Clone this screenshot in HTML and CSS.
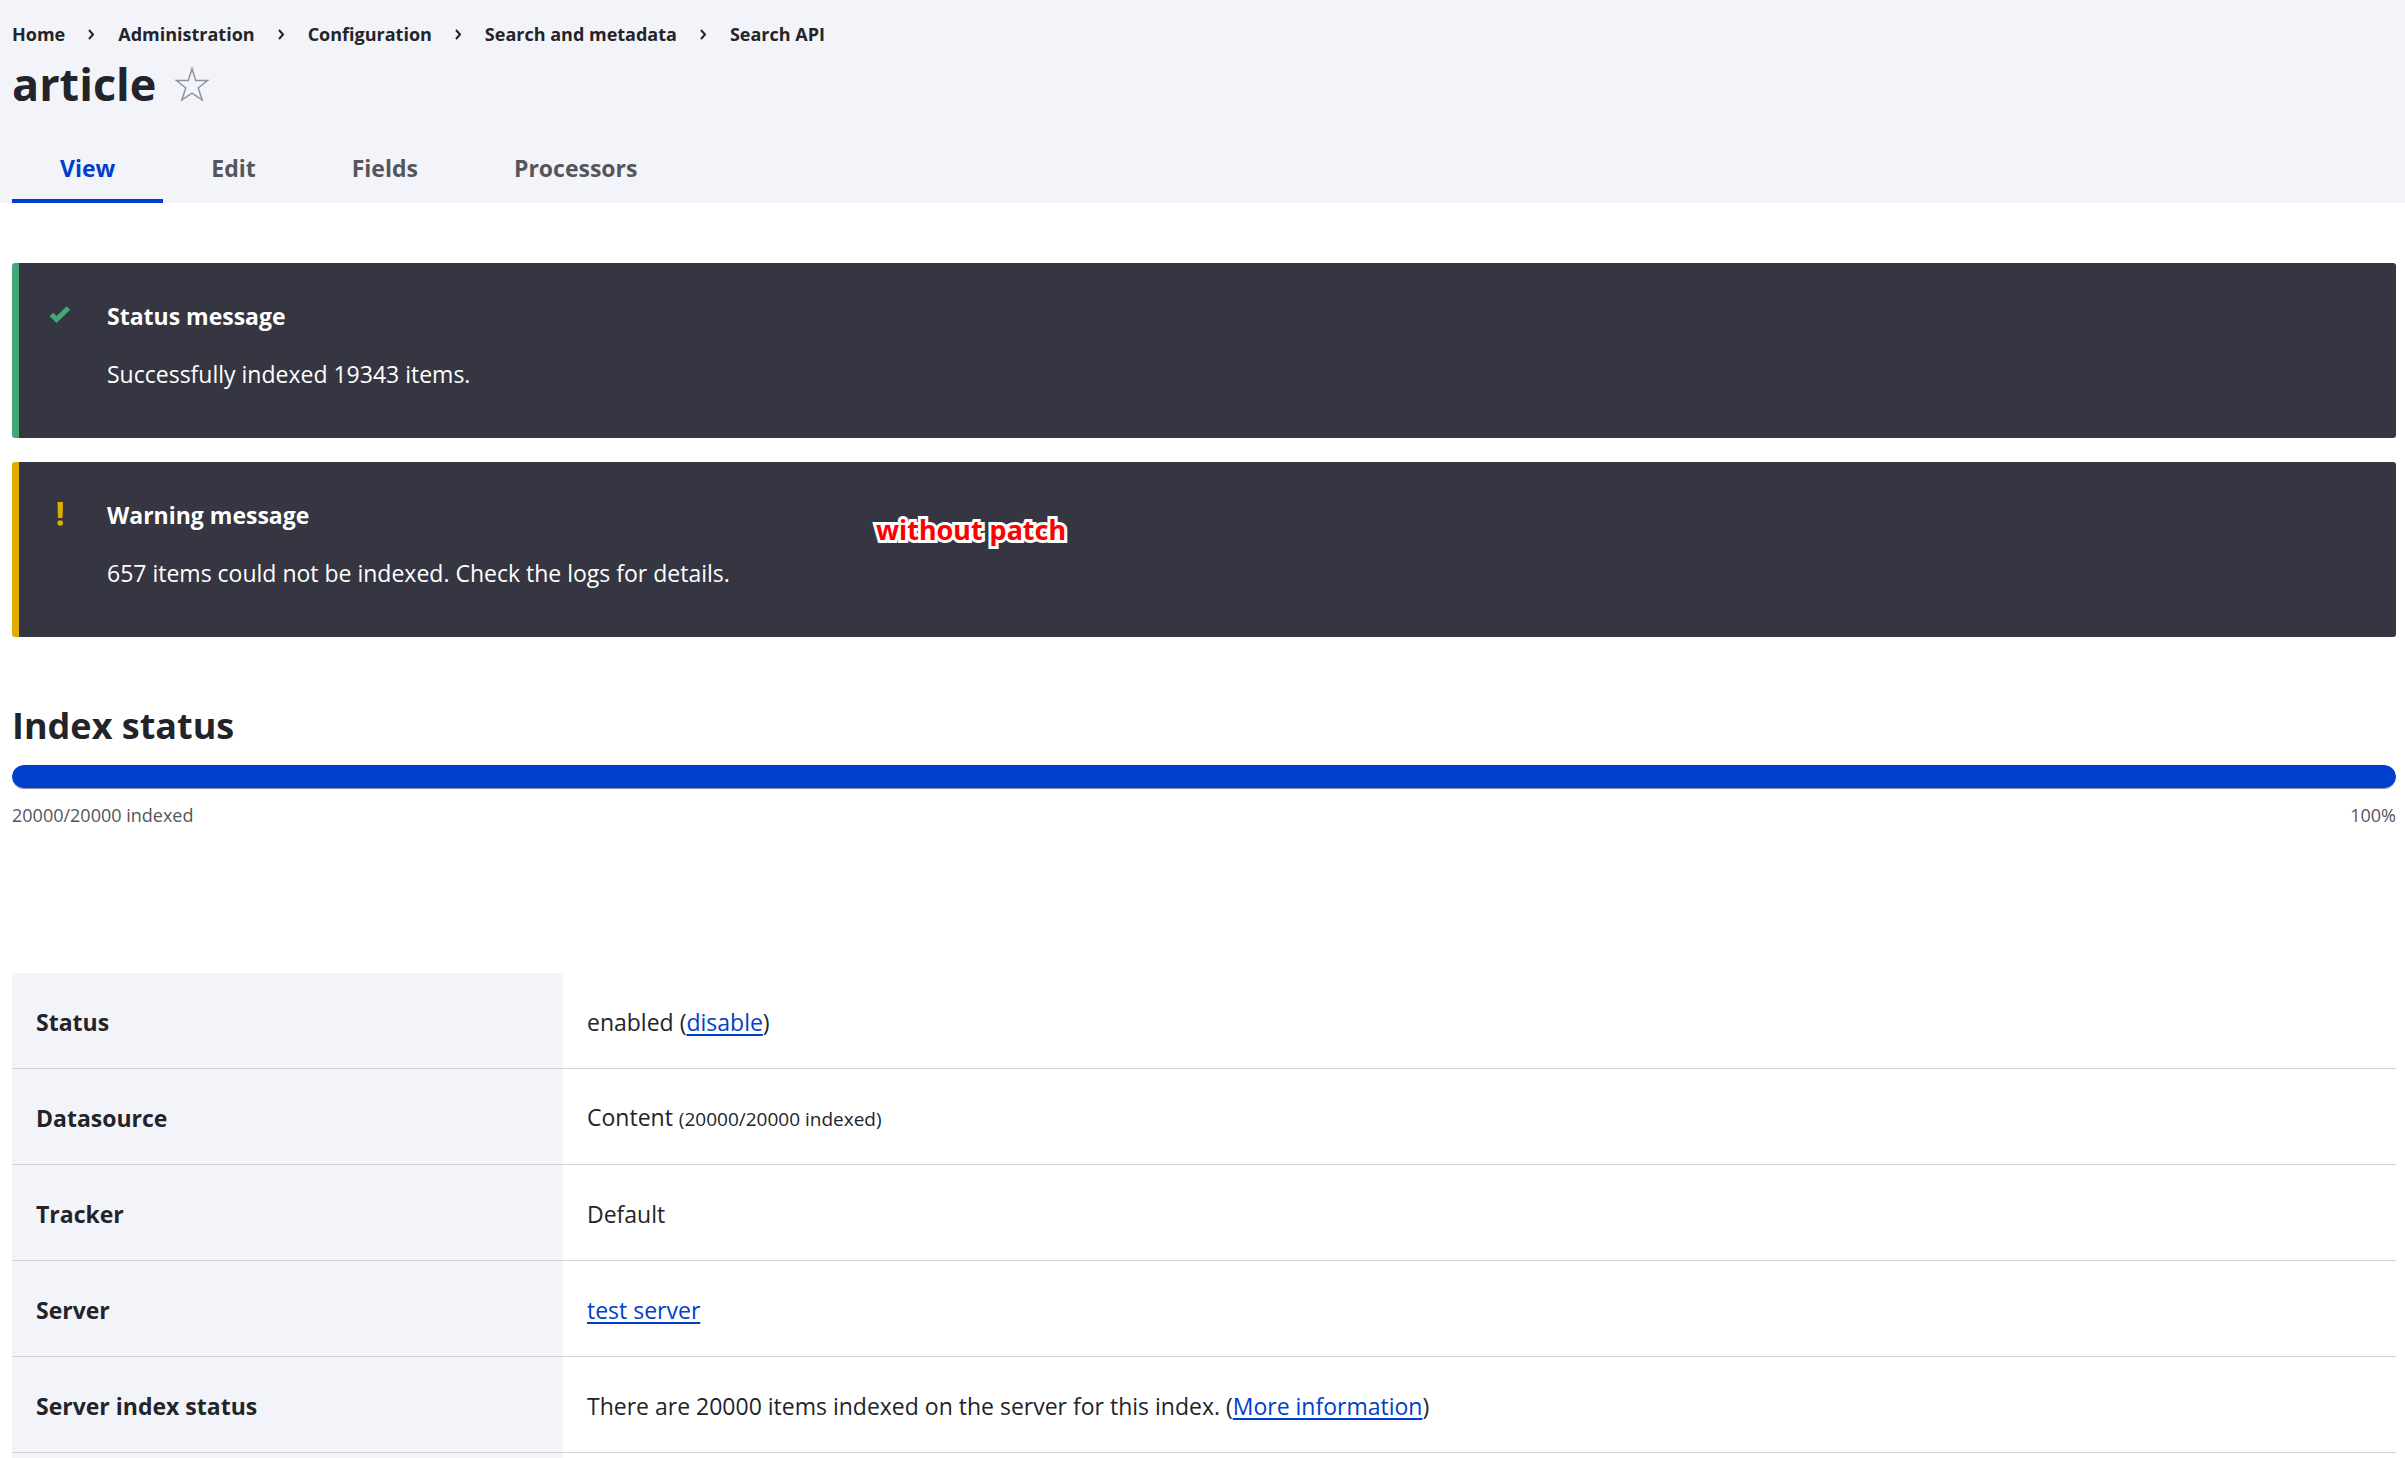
FILE: index.html
```html
<!DOCTYPE html>
<html lang="en">
<head>
<meta charset="utf-8">
<title>article | Search API</title>
<link rel="stylesheet" href="styles.css">
</head>
<body>
<header class="page-header">
  <nav aria-label="Breadcrumb">
    <ol class="breadcrumb">
      <li><a href="#">Home</a></li>
      <li><svg class="chevron" viewBox="0 0 7 11" aria-hidden="true"><path d="M1 1l4 4.500-4 4.500"/></svg><a href="#">Administration</a></li>
      <li><svg class="chevron" viewBox="0 0 7 11" aria-hidden="true"><path d="M1 1l4 4.500-4 4.500"/></svg><a href="#">Configuration</a></li>
      <li><svg class="chevron" viewBox="0 0 7 11" aria-hidden="true"><path d="M1 1l4 4.500-4 4.500"/></svg><a href="#">Search and metadata</a></li>
      <li><svg class="chevron" viewBox="0 0 7 11" aria-hidden="true"><path d="M1 1l4 4.500-4 4.500"/></svg><a href="#">Search API</a></li>
    </ol>
  </nav>
  <div class="title-row">
    <h1 class="page-title">article</h1>
    <button class="shortcut" type="button" aria-label="Add to shortcuts">
      <svg viewBox="0 0 36 36" aria-hidden="true"><path d="M18 2.500l3.700 12.100H33.500l-9.300 7.400 4 12L18 27.200 7.800 34l4-12L2.500 14.600h11.800z"/></svg>
    </button>
  </div>
  <nav class="tabs" aria-label="Primary tabs">
    <a class="tab tab-active" href="#" aria-current="page">View</a>
    <a class="tab" href="#">Edit</a>
    <a class="tab" href="#">Fields</a>
    <a class="tab" href="#">Processors</a>
  </nav>
</header>
<main class="content">
  <div class="messages">
    <section class="message message-status">
      <svg class="message-icon" viewBox="0 0 24 24" aria-hidden="true"><path d="M3.500 11.500l5 5L20.500 5" fill="none" stroke="currentColor" stroke-width="5"/></svg>
      <div>
        <h2 class="message-title">Status message</h2>
        <p class="message-text">Successfully indexed 19343 items.</p>
      </div>
    </section>
    <section class="message message-warning">
      <svg class="message-icon" viewBox="0 0 24 24" aria-hidden="true"><path d="M9.500 0h5.500l-.5 16h-4.500z" fill="currentColor"/><circle cx="12.250" cy="21" r="2.800" fill="currentColor"/></svg>
      <div>
        <h2 class="message-title">Warning message</h2>
        <p class="message-text">657 items could not be indexed. Check the logs for details.</p>
      </div>
      <span class="annotation">without patch</span>
    </section>
  </div>
  <section class="index-status">
    <h2 class="section-title" id="index-status">Index status</h2>
    <div class="progress-track" role="progressbar" aria-labelledby="index-status" aria-valuenow="100" aria-valuemin="0" aria-valuemax="100"><div class="progress-bar" style="width: 100%"></div></div>
    <div class="progress-labels"><span>20000/20000 indexed</span><span>100%</span></div>
  </section>
  <table class="summary">
    <tbody>
      <tr><th scope="row">Status</th><td>enabled (<a href="#">disable</a>)</td></tr>
      <tr><th scope="row">Datasource</th><td>Content <small>(20000/20000 indexed)</small></td></tr>
      <tr><th scope="row">Tracker</th><td>Default</td></tr>
      <tr><th scope="row">Server</th><td><a href="#">test server</a></td></tr>
      <tr><th scope="row">Server index status</th><td>There are 20000 items indexed on the server for this index. (<a href="#">More information</a>)</td></tr>
      <tr><th scope="row"></th><td></td></tr>
    </tbody>
  </table>
</main>
</body>
</html>
```

FILE: styles.css
```css
* {
  box-sizing: border-box;
}

/* The summary table runs past the fold; no visible scroll bar. */
html {
  scrollbar-width: none;
}

body {
  margin: 0;
  color: #232429;
  background: #fff;
  font-family: "Segoe UI", "Open Sans", "Noto Sans", sans-serif;
  font-size: 23px;
  line-height: 36px;
}

h1,
h2,
p {
  margin: 0;
}

a {
  color: #003ecc;
  text-decoration-thickness: 2px;
  text-underline-offset: 3px;
}

.page-header {
  padding: 20px 9px 0 12px;
  background: #f3f4f9;
}

.breadcrumb {
  display: flex;
  margin: 0;
  padding: 0;
  list-style: none;
  font-size: 18px;
  font-weight: 700;
  line-height: 28px;
}

.breadcrumb li {
  display: flex;
  align-items: center;
}

.breadcrumb a {
  color: inherit;
  text-decoration: none;
}

.chevron {
  width: 7px;
  height: 11px;
  margin: 0 23px;
  fill: none;
  stroke: #232429;
  stroke-width: 2;
}

.title-row {
  display: flex;
  align-items: center;
  gap: 18px;
  height: 72px;
}

.page-title {
  font-size: 45px;
  font-weight: 700;
  line-height: 60px;
}

.shortcut {
  width: 36px;
  height: 36px;
  padding: 0;
  border: 0;
  background: none;
}

.shortcut svg {
  display: block;
  fill: none;
  stroke: #8e929c;
  stroke-width: 1.5;
}

.tabs {
  display: flex;
  padding-top: 12px;
}

.tab {
  padding: 18px 48px 13px;
  border-bottom: 4px solid transparent;
  color: #55565b;
  font-weight: 700;
  text-decoration: none;
}

.tab-active {
  border-color: #003ecc;
  color: #003ecc;
}

.content {
  padding: 60px 9px 0 12px;
}

.messages {
  display: grid;
  gap: 24px;
}

.message {
  position: relative;
  display: flex;
  gap: 35px;
  padding: 35px 24px 46px 29px;
  border-left: 7px solid;
  border-radius: 3px;
  background: #353641;
}

.message-status {
  border-color: #42a877;
}

.message-warning {
  border-color: #e0ac00;
}

.message-icon {
  flex: none;
  width: 24px;
  height: 24px;
  margin-top: 5px;
}

.message-status .message-icon {
  color: #42a877;
}

.message-warning .message-icon {
  color: #e0ac00;
}

.message-title {
  margin-bottom: 22px;
  color: #fff;
  font-size: 23px;
  font-weight: 700;
  line-height: 36px;
}

.message-text {
  color: #fff;
}

.annotation {
  position: absolute;
  top: 50px;
  left: 857px;
  color: #f00;
  font-family: "Noto Sans", sans-serif;
  font-size: 27px;
  font-weight: 700;
  -webkit-text-stroke: 6px #fff;
  paint-order: stroke fill;
  stroke-linejoin: round;
}

.index-status {
  margin-top: 62px;
}

.section-title {
  font-size: 36px;
  font-weight: 700;
  line-height: 54px;
}

.progress-track {
  height: 24px;
  margin-top: 12px;
  border-bottom: 1px solid #8e929c;
  border-radius: 12px;
  overflow: hidden;
}

.progress-bar {
  height: 100%;
  border-radius: 12px;
  background: #003ecc;
}

.progress-labels {
  display: flex;
  justify-content: space-between;
  margin-top: 12px;
  color: #55565b;
  font-size: 18px;
  line-height: 28px;
}

.summary {
  width: 100%;
  margin-top: 144px;
  border-collapse: separate;
  border-spacing: 0;
}

.summary th,
.summary td {
  height: 96px;
  padding: 2px 24px 0;
  border-bottom: 1px solid #d3d4d9;
  text-align: left;
}

.summary th {
  width: 551px;
  background: #f3f4f9;
  font-weight: 700;
}

.summary small {
  font-size: 19px;
}
```
